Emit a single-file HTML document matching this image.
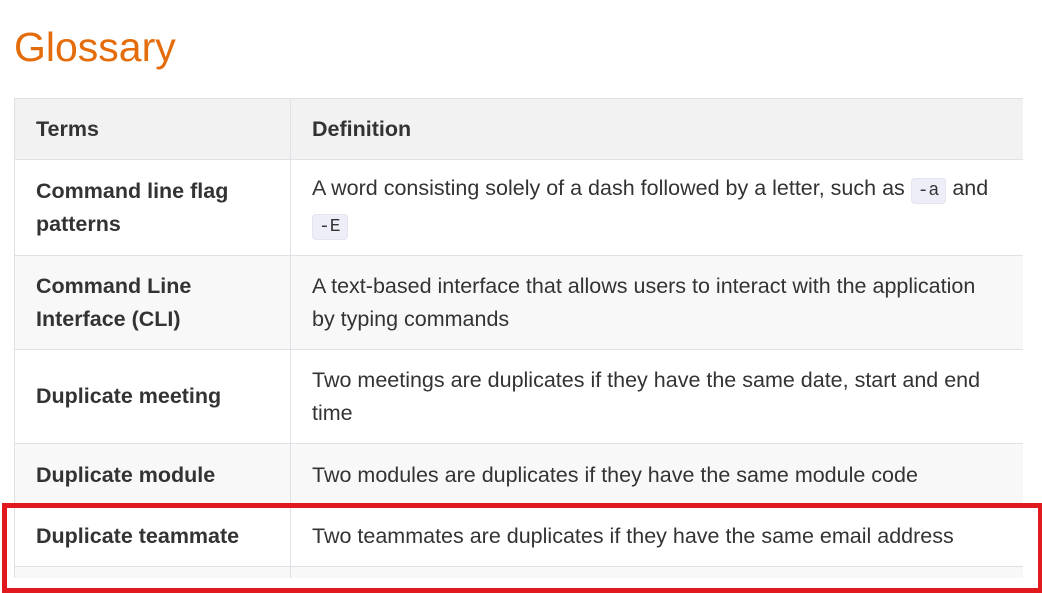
<!DOCTYPE html>
<html><head><meta charset="utf-8"><style>
html,body{margin:0;padding:0;background:#fff;width:1042px;height:578px;overflow:hidden;font-family:"Liberation Sans",sans-serif;color:#333}
h1{position:absolute;left:14px;top:22px;margin:0;font-weight:normal;font-size:41px;color:#e46c0a;line-height:50px}
.wrap{position:absolute;left:14px;top:98px;width:1009px;height:480px;overflow:hidden}
table{width:1020px;border-collapse:collapse;font-size:21.5px}
td,th{border:1px solid #dee2e6;padding:0 21px;text-align:left;vertical-align:middle;line-height:33px}
th{background:#f2f2f2;font-weight:bold;height:60px}
td:first-child,th:first-child{width:233px;border-left:1px solid #dee2e6}
td:first-child{font-weight:bold}
tr.s td{background:#f8f8f8}
code{font-family:"Liberation Mono",monospace;font-size:18px;background:#eeeef9;border-radius:4px;padding:2px 6px;border:1px solid #e4e4f2;white-space:nowrap}
.box{position:absolute;left:2px;top:503px;width:1031px;height:80px;border:5px solid #e0191e}
</style></head><body>
<h1>Glossary</h1>
<div class="wrap">
<table>
<tr><th>Terms</th><th>Definition</th></tr>
<tr style="height:96px"><td>Command line flag patterns</td><td>A word consisting solely of a dash followed by a letter, such as <code>-a</code> and<br><code>-E</code></td></tr>
<tr class="s" style="height:94px"><td>Command Line Interface (CLI)</td><td>A text-based interface that allows users to interact with the application<br>by typing commands</td></tr>
<tr style="height:94px"><td>Duplicate meeting</td><td>Two meetings are duplicates if they have the same date, start and end<br>time</td></tr>
<tr class="s" style="height:63px"><td>Duplicate module</td><td>Two modules are duplicates if they have the same module code</td></tr>
<tr style="height:60px"><td>Duplicate teammate</td><td>Two teammates are duplicates if they have the same email address</td></tr>
<tr class="s" style="height:40px"><td></td><td></td></tr>
</table>
</div>
<div class="box"></div>
</body></html>
